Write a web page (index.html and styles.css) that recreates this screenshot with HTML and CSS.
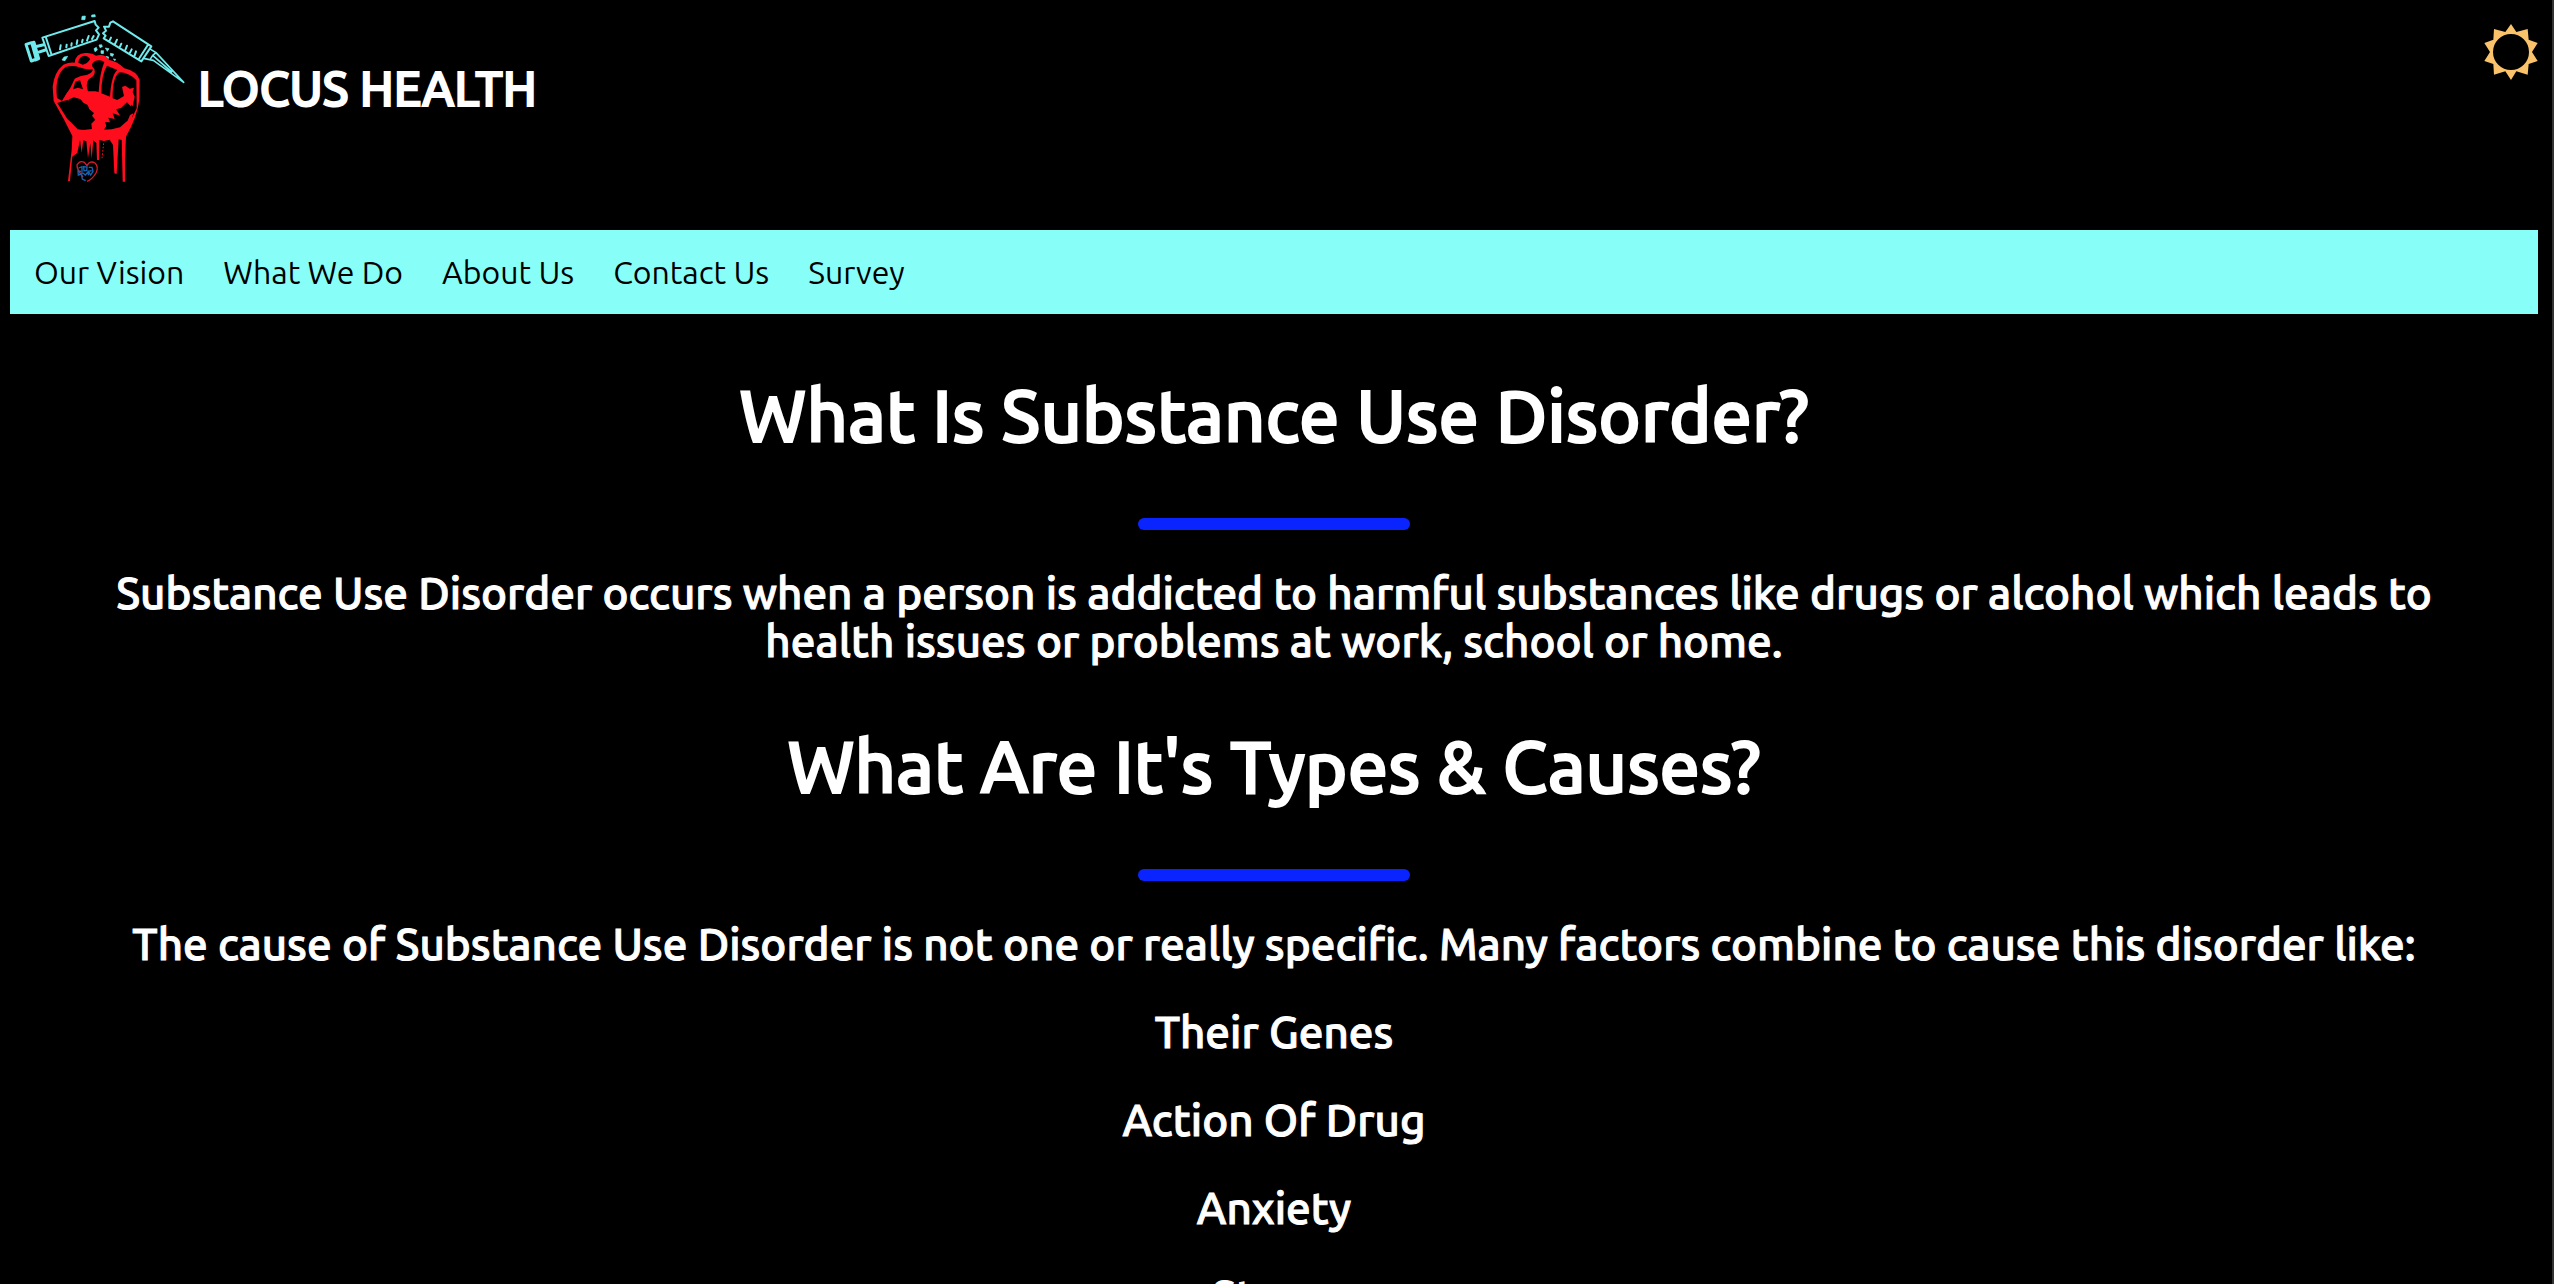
FILE: index.html
```html
<!DOCTYPE html>
<html lang="en">
<head>
<meta charset="utf-8">
<title>Locus Health</title>
<link rel="stylesheet" href="styles.css">
</head>
<body>
<header class="header">
  <a class="brand" href="#">
    <svg class="logo" viewBox="30 0 540 600" aria-hidden="true">
      <g fill="none" stroke="#70eaec" stroke-width="6" stroke-linejoin="round" stroke-linecap="round">
        <path d="M127 113L284 63L287 74L296 83L288 91L297 103L290 119L146 168ZM138 113L154 162M276 117L281 108M261 122L266 108M246 127L248 119M230 132L232 121M214 137L215 130M199 142L200 134M180 148L182 136"/>
        <path stroke-width="9" d="M78 133L95 128L109 177L94 183ZM96 128L102 127L116 176L107 180M106 140L131 134M112 158L136 150"/>
        <path d="M339 64L454 139L424 184L311 115L317 107L309 100L318 92L312 80L327 80L331 68ZM444 134L416 178M329 121L333 113M345 132L351 119M360 140L364 131M376 150L381 137M390 158L395 148M404 166L408 154"/>
        <path stroke-width="5" d="M452 148L468 158L551 247L460 181L434 176M468 158L458 166L450 179M458 166L515 216"/>
      </g>
      <path fill="#70eaec" stroke="#70eaec" stroke-width="2" d="M246 49L256 48L255 59L245 59ZM275 45L285 44L286 50L275 51ZM186 180L192 171L203 169L195 182ZM282 146L289 142L292 150L285 155ZM297 135L305 134L307 140L300 143ZM303 152L311 152L310 161L303 160ZM316 144L327 146L322 154ZM331 160L341 162L338 169L332 167ZM318 169L326 171L324 178L318 175ZM340 177L347 178L345 182Z"/>
      <path fill="#fe0d1c" d="M217 408L190 355L161 303L158 260Q163 215 190 194Q208 186 224 188Q227 160 256 159Q276 157 288 167Q314 160 328 180Q350 183 373 205Q410 213 419 240L418 300Q411 352 378 410L375 480L375 545H368L365 420L356 418L350 522L343 520L339 435L329 419L312 423L298 420L297 480L291 480L289 429L280 421L275 476L271 430L264 475L259 424L250 421L245 458L240 420L232 458L217 470L210 543H204L215 450Z"/>
      <g fill="#000">
        <path d="M235 188Q236 170 254 167Q268 169 270 178Q262 193 248 194Z"/>
        <path d="M171 294Q163 225 197 201Q218 194 238 202Q256 210 278 208Q279 218 262 224Q238 227 224 236L212 262L196 287L186 303Z"/>
        <path d="M283 207Q268 192 285 183Q302 178 313 186Q299 220 296 276L286 274L264 274Q256 253 266 238Q290 226 283 207Z"/>
        <path d="M321 197L352 210Q334 225 330 290L304 280Q304 225 321 197Z"/>
        <path d="M358 217Q388 218 409 241L410 325L397 352L378 366L360 382L335 388L312 389L319 377L315 366L330 367L325 353L344 357L338 340L361 347L348 328L363 324L381 307L392 319L401 285L352 300L338 295Q337 232 358 217Z"/>
        <path d="M172 309L187 304L202 300L222 292L242 298L250 308L263 315L268 328L282 339L276 347L286 359L274 371L276 387L250 390L233 388L212 366L202 357Z"/>
        <path d="M226 245L240 241L249 268L234 263L219 268Z"/>
      </g>
      <path fill="#fe0d1c" d="M366 261L376 257L389 266L402 263L398 276L404 290L398 319L382 303L364 315L352 300L372 288ZM187 302L201 278L217 263L212 285L204 304L200 291ZM378 374L390 345L400 340L389 380Z"/>
      <path fill="none" stroke="#fe0d1c" stroke-width="3" stroke-dasharray="5 5" d="M311 430L306 475"/>
      <path fill="none" stroke="#d51c2a" stroke-width="4" d="M249 531Q230 508 231 495Q239 480 253 487L261 497Q270 480 285 489Q297 501 288 519Q276 539 261 544"/>
      <path fill="none" stroke="#1764b5" stroke-width="4" d="M236 504L246 500V521L235 525L234 513L243 514M251 500L261 501L260 511L252 512ZM266 502L276 502L279 514L272 525L265 514L275 512M249 519L256 525L263 517L266 526M245 526L247 537L257 542"/>
    </svg>
    <span class="brand-name">LOCUS HEALTH</span>
  </a>
  <button class="theme-toggle" type="button" aria-label="Switch to light theme">
    <svg class="sun" viewBox="87 72 162 168" aria-hidden="true">
      <path fill="#f9c26b" fill-rule="evenodd" d="M168 72L184 96L218 87L221 119L248 129L231 156L248 183L221 192L218 224L184 214L168 240L151 214L117 224L115 192L88 183L105 156L88 129L115 119L117 87L151 96ZM168 102A54 54 0 1 0 168 210A54 54 0 1 0 168 102Z"/>
    </svg>
  </button>
</header>
<nav class="nav">
  <a href="#vision">Our Vision</a>
  <a href="#work">What We Do</a>
  <a href="#about">About Us</a>
  <a href="#contact">Contact Us</a>
  <a href="#survey">Survey</a>
</nav>
<main class="content">
  <section>
    <h1 class="heading">What Is Substance Use Disorder?</h1>
    <hr class="rule">
    <p class="text">Substance Use Disorder occurs when a person is addicted to harmful substances like drugs or alcohol which leads to health issues or problems at work, school or home.</p>
  </section>
  <section>
    <h1 class="heading">What Are It's Types &amp; Causes?</h1>
    <hr class="rule">
    <p class="text">The cause of Substance Use Disorder is not one or really specific. Many factors combine to cause this disorder like:</p>
    <p class="text">Their Genes</p>
    <p class="text">Action Of Drug</p>
    <p class="text">Anxiety</p>
    <p class="text">Stress</p>
  </section>
</main>
</body>
</html>
```
FILE: styles.css
```css
* {
  box-sizing: border-box;
}

html {
  height: 100%;
  background: #000;
}

body {
  height: 100%;
  margin: 0;
  padding: 0 14px 0 10px;
  overflow: hidden;
  border-right: 2px solid #333;
  background: #000;
  color: #fff;
  font-family: Ubuntu, "Noto Sans", "Open Sans", sans-serif;
}

.header {
  display: flex;
  justify-content: space-between;
  align-items: flex-start;
  padding-bottom: 30px;
}

.brand {
  display: flex;
  gap: 8px;
  color: inherit;
  text-decoration: none;
}

.logo {
  width: 180px;
  height: 200px;
}

.brand-name {
  padding-top: 54px;
  font-size: 48px;
  font-weight: 500;
  line-height: 68px;
  -webkit-text-stroke: 2px #fff;
}

.theme-toggle {
  margin-top: 24px;
  padding: 0;
  border: 0;
  background: none;
}

.sun {
  display: block;
  width: 54px;
  height: 56px;
}

.nav {
  display: flex;
  gap: 39px;
  padding: 22px 24px;
  background: #87fff8;
  font-size: 32px;
  line-height: 40px;
}

.nav a {
  color: #000;
  text-decoration: none;
}

.content {
  padding: 0 100px;
  text-align: center;
}

.heading {
  margin: 0;
  padding: 58px 0;
  font-size: 72px;
  font-weight: 500;
  line-height: 88px;
  -webkit-text-stroke: 2px #fff;
}

.rule {
  width: 272px;
  height: 12px;
  margin: 0 auto 39px;
  border: 0;
  border-radius: 6px;
  background: #0a24ff;
}

.text {
  margin: 0;
  font-size: 44px;
  font-weight: 500;
  line-height: 48px;
  -webkit-text-stroke: 1px #fff;
}

.text + .text {
  margin-top: 40px;
}
```
